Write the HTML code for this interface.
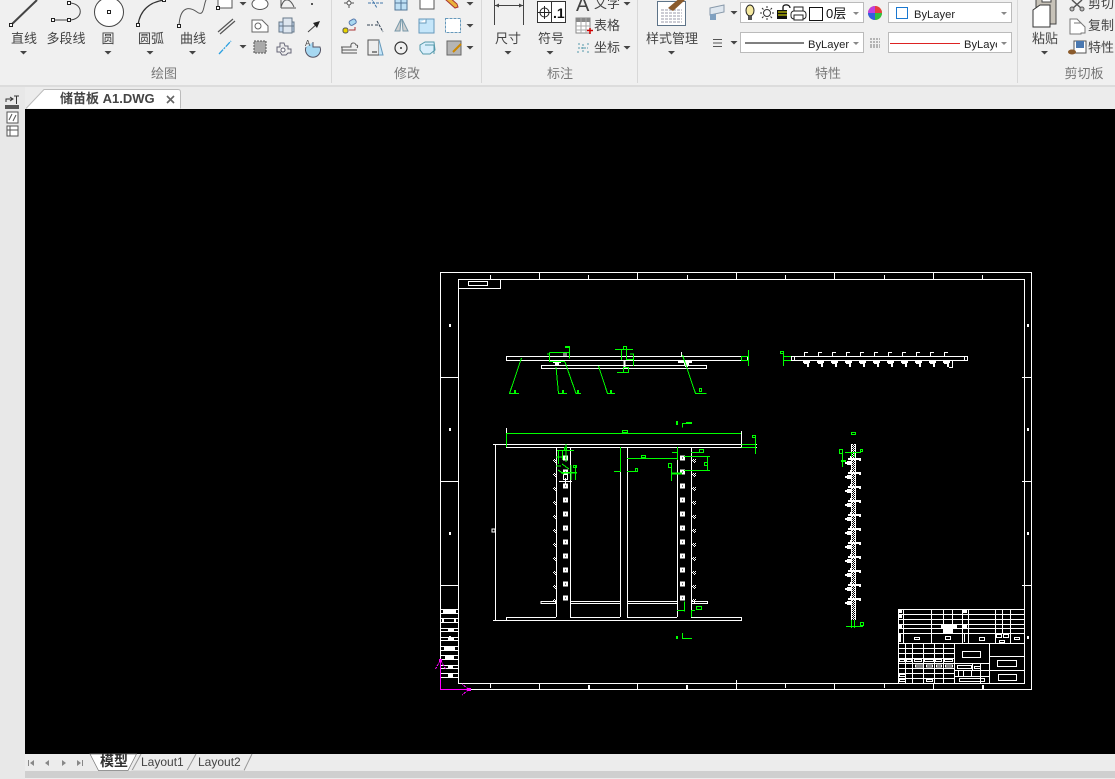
<!DOCTYPE html>
<html><head><meta charset="utf-8">
<style>
html,body{margin:0;padding:0;background:#f0f0f0}
body{width:1115px;height:779px;overflow:hidden;position:relative}
svg{position:absolute;left:0;top:0;display:block}
text{font-family:"Liberation Sans","Noto Sans CJK SC",sans-serif;font-size:13px;fill:#444}
.g{fill:#777;text-anchor:middle}
.m{text-anchor:middle}
.cad *{shape-rendering:crispEdges}
.w{fill:none;stroke:#fff;stroke-width:1}
.gr{fill:none;stroke:#0f0;stroke-width:1}
.ic{fill:none;stroke:#555;stroke-width:1}
</style></head><body>
<svg width="1115" height="779" viewBox="0 0 1115 779" xmlns="http://www.w3.org/2000/svg">
<defs>
<path id="tri" d="M-3.500 0H3.500L0 3.500Z" fill="#444"/>
<g id="sq"><rect x="-1.500" y="-1.500" width="3" height="3" fill="#fff" stroke="#222"/></g>
<path id="chk" d="M1 0h1v1h-1zM3 0h1v1h-1zM0 1h1v1h-1zM2 1h1v1h-1zM1 2h1v1h-1zM3 2h1v1h-1zM2 3h1v1h-1z" fill="#fff"/>
<g id="hole"><rect x="-2.500" y="-2.500" width="5" height="5" fill="#fff"/><rect x="-.5" y="-.5" width="1" height="1" fill="#000"/><use href="#chk" x="-12.500" y="1"/></g>
<g id="hole2"><rect x="-2.500" y="-2.500" width="5" height="5" fill="#fff"/><rect x="-.5" y="-.5" width="1" height="1" fill="#000"/><use href="#chk" x="9.500" y="1"/></g>
<g id="br2"><path d="M.5 356V352.500H4" class="w"/><rect x="-1" y="361" width="7" height="2" fill="#fff"/><rect x="0" y="363" width="4" height="1" fill="#fff"/><rect x="3" y="363" width="2" height="4" fill="#fff"/></g>
<g id="br3"><rect x="-3" y="0" width="12" height="2" fill="#fff"/><rect x="8" y="0" width="2" height="3" fill="#fff"/><rect x="-6" y="4" width="6" height="2" fill="#fff"/><rect x="-4" y="3" width="4" height="4" fill="#fff"/><rect x="-1" y="-2" width="1" height="2" fill="#fff"/><rect x="-1" y="4" width="3" height="3" fill="#000" opacity="0"/></g>
<pattern id="ck" width="2" height="2" patternUnits="userSpaceOnUse"><rect width="1" height="1" fill="#fff"/><rect x="1" y="1" width="1" height="1" fill="#fff"/></pattern>
</defs>

<!-- backgrounds -->
<rect width="1115" height="85" fill="#f0f0f0"/>
<rect y="85" width="1115" height="2" fill="#dcdcdc"/>
<rect y="87" width="1115" height="22" fill="#ececec"/>
<rect x="0" y="87" width="25" height="692" fill="#e8e8e8"/>
<rect x="25" y="109" width="1090" height="645" fill="#000"/>
<rect x="25" y="754" width="1090" height="17" fill="#ececec"/>
<rect x="25" y="771" width="1090" height="7" fill="#cfcfcf"/>
<rect x="25" y="778" width="1090" height="1" fill="#ececec"/>

<!-- ribbon separators -->
<g fill="#d8d8d8"><rect x="331" y="0" width="1" height="83"/><rect x="481" y="0" width="1" height="83"/><rect x="637" y="0" width="1" height="83"/><rect x="1017" y="0" width="1" height="83"/></g>

<!-- draw panel -->
<path d="M11 25L37 0" stroke="#444" stroke-width="2" fill="none"/><use href="#sq" x="11" y="25"/>
<path d="M53 20H69C84 20 84 3 69 3" stroke="#444" fill="none"/><use href="#sq" x="53" y="20"/><use href="#sq" x="69" y="20"/><use href="#sq" x="69" y="3"/>
<circle cx="109" cy="12" r="14.500" fill="#fff" stroke="#444"/><use href="#sq" x="109" y="12"/>
<path d="M138 25C140 10 150 2 164 0" stroke="#333" stroke-width="1.200" fill="none"/><use href="#sq" x="138" y="25"/><use href="#sq" x="164" y="0"/>
<path d="M179 26C180 5 190 7 197 12C205 18 203 3 207 -2" stroke="#555" fill="none"/><use href="#sq" x="179" y="26"/>
<text x="24" y="43" class="m">直线</text><text x="66" y="43" class="m">多段线</text><text x="108" y="43" class="m">圆</text><text x="151" y="43" class="m">圆弧</text><text x="193" y="43" class="m">曲线</text>
<use href="#tri" x="23.500" y="51"/><use href="#tri" x="108" y="51"/><use href="#tri" x="150" y="51"/><use href="#tri" x="192.500" y="51"/>
<rect x="218" y="-6" width="14" height="14" fill="#fff" stroke="#555"/><use href="#sq" x="218" y="8"/>
<use href="#tri" x="243" y="2"/><use href="#tri" x="243" y="45"/>
<ellipse cx="260" cy="4" rx="8" ry="5.500" fill="#fff" stroke="#555"/>
<path d="M281 8V-3M281 8H296M281 7C284 -3 290 -2 294 7" class="ic"/>
<rect x="311" y="3" width="2" height="2" fill="#555"/>
<path d="M218 32L233 19M220 34L235 21" stroke="#555" stroke-width="1.200" fill="none"/>
<path d="M252 20H262L268 26V32H252Z" fill="#fff" stroke="#666"/><circle cx="258" cy="26" r="3" fill="none" stroke="#666"/>
<rect x="279" y="22" width="15" height="10" fill="#c5daf0" stroke="#678"/><rect x="283" y="18" width="9" height="15" fill="#dde6ef" stroke="#678"/><path d="M279 26H294" stroke="#678"/>
<path d="M308 32L318 23" stroke="#444"/><path d="M320 21L313 23L317 28Z" fill="#222"/>
<path d="M219 54L231 41" stroke="#2a9fe0" stroke-width="1.300" stroke-dasharray="6 1 2 1" fill="none"/>
<rect x="254" y="41" width="12" height="12" fill="#a9a9a9" stroke="#555" stroke-dasharray="2 1"/>
<path d="M280 43h4l1 3h3v3h3v4h-3l-2 2h-4l-2-3h-3v-5h3Z" fill="#eee" stroke="#667"/><circle cx="283" cy="50" r="2" fill="#fff" stroke="#667"/>
<path d="M306 47A7.500 7.500 0 1 0 320 47H313V42" fill="#a6d8f2" stroke="#556"/><text x="305" y="46" style="font-size:8px">A</text>
<text x="164" y="78" class="g">绘图</text>

<!-- modify panel -->
<g class="ic">
<path d="M344 3H354M349 -2V8" stroke="#555"/><circle cx="349" cy="3" r="2" fill="#fff"/>
<path d="M368 3H383M371 -2L377 8" stroke-dasharray="3 1" stroke="#47a"/>
<path d="M395 -3H407V10H395ZM401 -3V10M395 3H407" fill="#bfe0f5" stroke="#579"/>
<rect x="420" y="-4" width="14" height="13" fill="#fff"/>
<path d="M446 0L455 8L458 7L457 4L449 -3Z" fill="#e9b23c" stroke="#a33"/>
</g>
<use href="#tri" x="470" y="2"/><use href="#tri" x="470" y="24"/><use href="#tri" x="470" y="46"/>
<rect x="343" y="28" width="5" height="5" rx="2" fill="#e8d400" stroke="#555"/><rect x="349" y="20" width="7" height="5" rx="2" fill="#a9d8f0" stroke="#57a" transform="rotate(-30 352 22)"/><path d="M349 30H355V27" stroke="#a33" fill="none"/>
<path d="M367 25H373M375 25H378M377 21L383 32" stroke="#345" stroke-width="1" stroke-dasharray="3 1" fill="none"/>
<path d="M401 19L395 31H400ZM402 19L408 31H403Z" fill="#cfcfcf" stroke="#79a"/>
<rect x="419" y="19" width="15" height="14" fill="#c5e6fa" stroke="#69b"/><path d="M419 23H426V19" fill="#fff" stroke="#69b"/>
<rect x="445.500" y="18.500" width="15" height="14" fill="#fff" stroke="#69b" stroke-dasharray="3 1"/>
<path d="M342 50H357M341 47H351C350 42 355 42 356 45C359 45 357 48 357 48M342 47V53H357" class="ic"/>
<path d="M368 40H379V55H368Z" fill="#eee" stroke="#555"/><path d="M379 40L383 55H379" fill="#c5e6fa" stroke="#69b"/><path d="M372 52H377" stroke="#222"/>
<circle cx="401" cy="48" r="6" fill="none" stroke="#333" stroke-width="1.200"/><circle cx="401" cy="48" r="1" fill="#333"/>
<path d="M420 45L425 42H434L435 50L430 54H423L420 50ZM425 45H434V54" fill="#d9eefb" stroke="#59a"/>
<rect x="447" y="41" width="14" height="14" fill="#b5b5b5" stroke="#666"/><path d="M453 52L461 44" stroke="#c80" stroke-width="2"/>
<text x="407" y="78" class="g">修改</text>

<!-- annotate panel -->
<path d="M494.500 0V25M523.500 0V25M495 5.500H523" stroke="#444" fill="none"/><path d="M495 5.500l4-2v4zM523 5.500l-4-2v4z" fill="#444"/>
<rect x="537.500" y="1.500" width="28" height="21" fill="#fff" stroke="#333"/><path d="M551.500 1V22" stroke="#333"/><circle cx="544.500" cy="12.500" r="4.500" fill="none" stroke="#222"/><path d="M538 12.500H551M544.500 6V19" stroke="#222"/>
<text x="553" y="18" style="font-size:14px;font-weight:bold;fill:#111">.1</text>
<text x="508" y="43" class="m">尺寸</text><text x="551" y="43" class="m">符号</text>
<use href="#tri" x="508" y="51"/><use href="#tri" x="550" y="51"/>
<text x="576" y="11" style="font-size:20px;fill:#444">A</text><text x="594" y="8">文字</text><use href="#tri" x="627" y="2"/>
<rect x="576" y="18" width="14" height="15" fill="#fff" stroke="#888"/><rect x="576" y="18" width="14" height="4" fill="#888"/><path d="M576 26H590M576 30H590M581 18V33M586 18V33" stroke="#aaa"/><path d="M587 30.500H593M590 28V34" stroke="#c00" stroke-width="1.500"/>
<text x="594" y="30">表格</text>
<path d="M578 44h2M587 44h2M577 52h3M587 52h3M583 44V53M578 48h10" stroke="#59a" stroke-dasharray="2 1" fill="none"/>
<text x="594" y="52">坐标</text><use href="#tri" x="627" y="46"/>
<text x="560" y="78" class="g">标注</text>

<!-- properties -->
<rect x="657.500" y="1.500" width="28" height="24" fill="#fff" stroke="#5d7388"/><path d="M661 10H682M661 13H682M661 16H682M661 19H682M661 22H682" stroke="#99a" stroke-dasharray="3 1"/><path d="M668 8L681 -3L685 0L673 11Z" fill="#8a5a2b"/>
<text x="672" y="43" class="m">样式管理</text><use href="#tri" x="671.500" y="51"/>
<path d="M710 8L724 5V12L710 15Z" fill="#dfe7ef" stroke="#89a"/><rect x="710" y="14" width="6" height="6" fill="#7fa0c0"/>
<use href="#tri" x="734" y="11"/><use href="#tri" x="734" y="41"/>
<path d="M713 39.500H722M713 43H722M713 46.500H722" stroke="#555"/>
<rect x="740.500" y="2.500" width="123" height="20" fill="#fff" stroke="#bbb"/>
<rect x="740.500" y="32.500" width="123" height="20" fill="#fff" stroke="#bbb"/>
<rect x="888.500" y="2.500" width="123" height="20" fill="#fff" stroke="#bbb"/>
<rect x="888.500" y="32.500" width="123" height="20" fill="#fff" stroke="#bbb"/>
<ellipse cx="750" cy="10.500" rx="4" ry="5.500" fill="#f5e9a0" stroke="#222"/><rect x="748" y="16" width="4" height="4" fill="#555"/>
<circle cx="767" cy="13" r="3.500" fill="#fff" stroke="#333"/><path d="M767 6V8M767 18V20M760 13H762M772 13H774M762 8L763.500 9.500M772 8L770.500 9.500M762 18L763.500 16.500M772 18L770.500 16.500" stroke="#333"/>
<rect x="777" y="10" width="10" height="9" fill="#111"/><path d="M778 12H787M778 15H787" stroke="#ee0"/><path d="M783 10V7C783 4 790 4 790 8" stroke="#111" stroke-width="1.300" fill="none"/>
<rect x="791" y="11" width="15" height="8" rx="3" fill="#fff" stroke="#222"/><rect x="794" y="7" width="9" height="4" fill="#fff" stroke="#222"/><rect x="794" y="15" width="9" height="5" fill="#fff" stroke="#222"/>
<rect x="809.500" y="7.500" width="13" height="13" fill="#fff" stroke="#111"/>
<text x="826" y="18" style="fill:#111">0层</text><path d="M853 12h6l-3 3z" fill="#888"/>
<path d="M745 43H804" stroke="#000"/><text x="808" y="48" style="fill:#222;font-size:11.200px">ByLayer</text><path d="M853 42h6l-3 3z" fill="#888"/>
<circle cx="875" cy="13" r="7" fill="#e8a020"/><path d="M875 13V6A7 7 0 0 1 882 13Z" fill="#e84040"/><path d="M875 13H882A7 7 0 0 1 875 20Z" fill="#30c040"/><path d="M875 13V20A7 7 0 0 1 868 13Z" fill="#3060e0"/><path d="M875 13H868A7 7 0 0 1 875 6Z" fill="#c040e0"/>
<rect x="896.500" y="7.500" width="11" height="11" fill="#fff" stroke="#1a78d0"/><text x="914" y="18" style="fill:#222;font-size:11.200px">ByLayer</text><path d="M1001 12h6l-3 3z" fill="#888"/>
<path d="M870 39H880M870 42H880M870 45H880M870 47H880" stroke="#777" stroke-dasharray="2 1"/>
<path d="M890 43.500H960" stroke="#d22"/>
<svg x="964" y="33" width="33" height="19" viewBox="0 0 33 19"><text x="0" y="15" style="fill:#222;font-size:11.200px">ByLayer</text></svg>
<path d="M1001 42h6l-3 3z" fill="#888"/>
<text x="828" y="78" class="g">特性</text>

<!-- clipboard -->
<rect x="1036" y="-3" width="20" height="27" fill="#c7c2b8" stroke="#444"/><rect x="1042" y="-3" width="9" height="5" fill="#fff" stroke="#444"/><path d="M1033 10L1040 5H1050V27H1033Z" fill="#fff" stroke="#333"/>
<text x="1045" y="43" class="m">粘贴</text><use href="#tri" x="1044.500" y="51"/>
<path d="M1072 0L1082 9M1082 0L1072 9" stroke="#555" stroke-width="1.500"/><circle cx="1072" cy="9" r="2" fill="#bbb" stroke="#555"/><circle cx="1082" cy="9" r="2" fill="#bbb" stroke="#555"/>
<text x="1088" y="8">剪切</text>
<path d="M1070 19H1077L1081 23V34H1070Z" fill="#fff" stroke="#777"/><path d="M1074 23H1081L1085 27V33H1081" fill="#fff" stroke="#777"/>
<text x="1088" y="30">复制</text>
<rect x="1074" y="41" width="12" height="12" fill="#fff" stroke="#555"/><rect x="1076" y="41" width="8" height="7" fill="#4a78b0"/><ellipse cx="1072" cy="52" rx="4" ry="2.500" fill="#8a5a2b"/>
<text x="1088" y="52">特性</text>
<text x="1084" y="78" class="g">剪切板</text>

<!-- doc tab -->
<path d="M26 108.500L44 89.500H178Q180.500 89.500 180.500 92V108.500" fill="#fff" stroke="#bbb"/>
<text x="60" y="103" style="font-weight:bold;font-size:13px;fill:#444">储苗板 A1.DWG</text>
<path d="M167 96L174 103M174 96L167 103" stroke="#666" stroke-width="1.600"/>

<!-- left strip -->
<rect x="5" y="105" width="14" height="4" fill="#555"/><path d="M6 102V99H12M10 97L13 99L10 101M14 96H19M16.500 96V104" stroke="#333" fill="none"/>
<rect x="7" y="112" width="11" height="11" fill="#fff" stroke="#555"/><path d="M9 120L12 114M13 121L16 115" stroke="#555"/>
<rect x="7" y="126" width="11" height="10" fill="#fff" stroke="#555"/><path d="M10 126V136M7 130H18" stroke="#555"/>

<!-- CAD drawing -->
<g class="cad">
<rect x="440.500" y="272.500" width="591" height="417" class="w"/>
<rect x="458.500" y="279.500" width="566" height="404" class="w"/>
<rect x="458.500" y="279.500" width="42" height="9" class="w"/>
<rect x="468.500" y="281.500" width="19" height="4" class="w"/>
<!-- frame ticks -->
<path class="w" d="M490.500 275V279M539.500 272V279M588.500 275V279M637.500 272V279M687.500 275V279M736.500 272V279M785.500 275V279M834.500 272V279M884.500 275V279M933.500 272V279M982.500 275V279
M490.500 684V688M539.500 684V689M637.500 684V689M736.500 680V689M785.500 684V688M834.500 684V689M884.500 684V688M933.500 684V689
M441 377.500H458M441 481.500H458M441 585.500H458M1022 377.500H1031M1022 481.500H1031M1022 585.500H1031"/>
<g fill="#fff"><rect x="449" y="324" width="2" height="3"/><rect x="449" y="428" width="2" height="3"/><rect x="449" y="532" width="2" height="3"/><rect x="449" y="636" width="2" height="3"/>
<rect x="1027" y="324" width="2" height="3"/><rect x="1027" y="428" width="2" height="3"/><rect x="1027" y="532" width="2" height="3"/><rect x="1027" y="636" width="2" height="3"/>
<rect x="588" y="685" width="2" height="4"/><rect x="686" y="685" width="2" height="4"/><rect x="982" y="685" width="2" height="4"/></g>

<!-- left margin block -->
<path class="w" d="M441 609.500H458M441 613.500H458M441 618.500H458M441 622.500H458M441 628.500H458M441 631.500H458M441 637.500H458M441 640.500H458M441 646.500H458M441 650.500H458M441 655.500H458M441 659.500H458M441 665.500H458M441 668.500H458M441 673.500H458M441 677.500H458"/>
<g fill="#fff"><rect x="443" y="610" width="13" height="3"/><rect x="448" y="629" width="6" height="2"/><rect x="448" y="638" width="6" height="2"/><rect x="444" y="647" width="11" height="3"/><rect x="445" y="656" width="9" height="3"/><rect x="448" y="666" width="5" height="2"/><rect x="448" y="674" width="5" height="3"/><rect x="442" y="619" width="2" height="3"/><rect x="454" y="619" width="2" height="3"/></g>

<!-- figure 1 -->
<rect x="506.500" y="356.500" width="241" height="4" class="w"/>
<rect x="541.500" y="365.500" width="165" height="3" class="w"/>
<path class="w" d="M624 361V367M625 361V367M564 352V356M566 352V356M681.500 352V356"/>
<path d="M553 361h8v2h-2v2h-4v-2h-2zM678 361h14v2h-3v2h-1v2h-3v-2h-1v-2h-6z" fill="#fff"/>
<path class="gr" d="M521.500 358L509.500 393.500H519M556 367L558.500 393.500H567M565 362L576 393.500H581M598.500 366L607.500 393.500H615M682.500 355L695.500 393.500H706.500
M549.500 352.500H569M549.500 352.500V361.500H565M569.500 346.500V358.500M566 346.500H570M547 354H549M615 349.500H633M621.500 349.500V360M626.500 349.500V359.500H633M633.500 354V366M630 354H634M617 372.500H623M748.500 350V366"/>
<rect x="623.500" y="346.500" width="3" height="3" class="gr"/><rect x="623.500" y="367.500" width="5" height="5" class="gr"/><rect x="741.500" y="356.500" width="7" height="4" class="gr"/>
<g fill="#0f0"><rect x="514" y="390" width="2" height="3"/><rect x="562" y="390" width="2" height="3"/><rect x="577" y="390" width="2" height="3"/><rect x="610" y="390" width="2" height="3"/><rect x="565" y="346" width="4" height="2"/></g>
<rect x="699.500" y="388.500" width="2" height="3" class="gr"/>

<!-- figure 2 -->
<rect x="791.500" y="356.500" width="176" height="4" class="w"/>
<path class="w" d="M794.500 356V360M964.500 356V360"/>
<use href="#br2" x="804"/><use href="#br2" x="818"/><use href="#br2" x="832"/><use href="#br2" x="846"/><use href="#br2" x="860"/><use href="#br2" x="874"/><use href="#br2" x="888"/><use href="#br2" x="902"/><use href="#br2" x="916"/><use href="#br2" x="930"/><use href="#br2" x="944"/>
<path class="w" d="M952.500 361V367.500H949"/>
<rect x="780.500" y="351.500" width="3" height="2" class="gr"/><path class="gr" d="M783.500 354V366M784 356.500H791M784 360.500H791"/>

<!-- figure 4 -->
<path class="w" d="M493 444.500H757M506 447.500H757M495.500 444V620M506.500 428V433M741.500 431V447M556.500 447V617M570.500 447V617M620.500 447V617M627.500 447V617M677.500 447V617M691.500 447V617
M506.500 617.500H556M570 617.500H620M627 617.500H677M691 617.500H741.500V620.500H493M506.500 617V620
M541 601.500H556M541 603.500H556M541 601V604M570 601.500H620M570 603.500H620M627 601.500H677M627 603.500H677M691 601.500H707M691 603.500H707M707.500 601V604"/>
<use href="#hole" x="565.500" y="458"/><use href="#hole" x="565.500" y="472"/><use href="#hole" x="565.500" y="486"/><use href="#hole" x="565.500" y="500"/><use href="#hole" x="565.500" y="514"/><use href="#hole" x="565.500" y="528"/><use href="#hole" x="565.500" y="542"/><use href="#hole" x="565.500" y="556"/><use href="#hole" x="565.500" y="570"/><use href="#hole" x="565.500" y="584"/><use href="#hole" x="565.500" y="598"/>
<use href="#hole2" x="682.500" y="458"/><use href="#hole2" x="682.500" y="472"/><use href="#hole2" x="682.500" y="486"/><use href="#hole2" x="682.500" y="500"/><use href="#hole2" x="682.500" y="514"/><use href="#hole2" x="682.500" y="528"/><use href="#hole2" x="682.500" y="542"/><use href="#hole2" x="682.500" y="556"/><use href="#hole2" x="682.500" y="570"/><use href="#hole2" x="682.500" y="584"/><use href="#hole2" x="682.500" y="598"/>
<rect x="563.500" y="474.500" width="4" height="5" class="w"/><path class="w" d="M559 481.500H572M565.500 478V484"/>
<rect x="492" y="529" width="3" height="3" fill="#000" stroke="#fff"/>
<path class="gr" d="M506.500 433.500H741M506.500 433V447M741.500 444.500H755M741.500 447.500H755M755.500 435V454M682.500 423V427.500M682.500 423.500H692M686 422.500H692M684.500 601.500V611.500M677 610.500H684M691.500 610V617M691.500 610.500H695M682.500 633V638.500H692
M557 450.500H574M558.500 450V464M562.500 450V460M566 444V462M556 457H562M562 464L569 469M556 466H561M558 470L564 474M571 465V480M561 473H577M561 472.500H577M575.500 466V480
M627 458.500H677M620.500 447V472M614 471.500H620M627 471.500H637M677.500 447V460M672 452.500H677M684 456.500H710M707.500 456.500V470.500M684 470.500H710M691 452.500H703M671.500 467V481M671.500 474H682M671.500 473H682"/>
<rect x="564.500" y="447.500" width="2" height="3" class="gr"/><rect x="573.500" y="465.500" width="3" height="2" class="gr"/><rect x="622.500" y="430.500" width="5" height="2" class="gr"/><rect x="641.500" y="455.500" width="4" height="2" class="gr"/><rect x="635.500" y="468.500" width="2" height="3" class="gr"/><rect x="699.500" y="449.500" width="4" height="3" class="gr"/><rect x="704.500" y="462.500" width="3" height="3" class="gr"/><rect x="668.500" y="463.500" width="3" height="4" class="gr"/><rect x="696.500" y="606.500" width="5" height="3" class="gr"/><rect x="752.500" y="435.500" width="3" height="2" class="gr"/>
<rect x="676" y="421" width="2" height="4" fill="#0f0"/><rect x="676" y="636" width="2" height="3" fill="#0f0"/>

<!-- figure 3 -->
<rect x="851" y="444" width="5" height="176" fill="url(#ck)"/>
<path d="M851.500 444V620M855.500 444V620" stroke="#fff" fill="none" stroke-dasharray="3 1"/>
<use href="#br3" x="851" y="458"/><use href="#br3" x="851" y="472"/><use href="#br3" x="851" y="486"/><use href="#br3" x="851" y="500"/><use href="#br3" x="851" y="514"/><use href="#br3" x="851" y="528"/><use href="#br3" x="851" y="542"/><use href="#br3" x="851" y="556"/><use href="#br3" x="851" y="570"/><use href="#br3" x="851" y="584"/><use href="#br3" x="851" y="598"/>
<rect x="851.500" y="432.500" width="4" height="2" class="gr"/><rect x="839.500" y="449.500" width="3" height="4" class="gr"/><rect x="860.500" y="449.500" width="2" height="2" class="gr"/><rect x="860.500" y="622.500" width="3" height="3" class="gr"/>
<path class="gr" d="M842.500 454V467M845 452.500H861M851.500 452V457M854.500 452V457M841 460.500H846M841 461.500H846M846 626.500H863M851.500 620V628M854.500 620V628"/>

<!-- title block -->
<rect x="898.500" y="609.500" width="126" height="74" class="w"/>
<path class="w" d="M898 614.500H1024M898 619.500H1024M898 624.500H1024M898 628.500H1024M898 633.500H1024M898 643.500H1024
M903.500 609V643M931.500 609V643M943.500 609V633M952.500 609V633M962.500 609V643M968.500 609V643M995.500 609V643M1002.500 609V633M1010.500 609V643
M954.500 643V683M989.500 643V683M898 648.500H954M898 653.500H954M898 658.500H954M898 663.500H954M898 668.500H954M898 673.500H954M898 678.500H954
M905.500 643V683M912.500 643V683M923.500 643V683M934.500 643V683M943.500 643V683
M954 663.500H989M954 670.500H989M954 676.500H989M989 656.500H1024M989 670.500H1024M972.500 663V670M980.500 663V683M958.500 670V677M963.500 670V677M971.500 670V677"/>
<g fill="#fff"><rect x="941" y="624" width="16" height="4"/><rect x="943" y="629" width="10" height="4"/><rect x="945" y="614" width="6" height="1"/><rect x="899" y="634" width="2" height="8"/><rect x="899" y="610" width="3" height="3"/><rect x="899" y="615" width="3" height="3"/><rect x="899" y="625" width="3" height="3"/><rect x="963" y="610" width="4" height="3"/><rect x="963" y="625" width="4" height="3"/><rect x="964" y="634" width="1" height="8"/></g>
<rect x="914.500" y="637.500" width="5" height="2" class="w"/><rect x="945.500" y="636.500" width="5" height="3" class="w"/><rect x="979.500" y="637.500" width="5" height="3" class="w"/><rect x="1014.500" y="637.500" width="5" height="2" class="w"/><rect x="996.500" y="634.500" width="5" height="3" class="w"/><rect x="1003.500" y="634.500" width="5" height="3" class="w"/><rect x="999.500" y="640.500" width="5" height="2" class="w"/>
<rect x="962.500" y="651.500" width="18" height="6" class="w"/><rect x="957.500" y="665.500" width="14" height="3" class="w"/><rect x="974.500" y="666.500" width="6" height="2" class="w"/><rect x="959.500" y="678.500" width="25" height="3" class="w"/>
<rect x="997.500" y="660.500" width="19" height="6" class="w"/><rect x="998.500" y="674.500" width="18" height="6" class="w"/>
<rect x="899.500" y="659.500" width="5" height="2" class="w"/><rect x="906.500" y="659.500" width="5" height="2" class="w"/><rect x="914.500" y="659.500" width="7" height="2" class="w"/><rect x="924.500" y="659.500" width="9" height="2" class="w"/><rect x="935.500" y="659.500" width="6" height="2" class="w"/><rect x="944.500" y="659.500" width="8" height="2" class="w"/><rect x="915.500" y="665" width="8" height="2" class="w"/><rect x="926.500" y="665" width="6" height="2" class="w"/><rect x="936.500" y="665" width="5" height="2" class="w"/><rect x="945.500" y="665" width="7" height="2" class="w"/><rect x="899.500" y="674.500" width="6" height="2" class="w"/><rect x="899.500" y="679.500" width="6" height="2" class="w"/><rect x="926.500" y="679.500" width="6" height="2" class="w"/>

<!-- UCS -->
<path d="M440.500 661V689.500H469" stroke="#f0f" fill="none"/>
<path d="M440.500 660L435.500 669M440.500 660L445.500 669M469 689.500L462 684M469 689.500L462 695" stroke="#f0f" stroke-dasharray="3 1" fill="none"/>
<rect x="439" y="659" width="3" height="3" fill="#f0f"/><rect x="468" y="688" width="3" height="3" fill="#f0f"/>
</g>

<!-- bottom tabs -->
<g fill="#888"><path d="M28 760h1v6h-1zM34 760v6l-4-3zM49 760v6l-4-3zM62 760l4 3-4 3zM77 760l4 3-4 3zM82 760h1v6h-1z"/></g>
<path d="M90 754L98.500 770.500H128L136.500 754Z" fill="#fff" stroke="#777" stroke-width=".7"/>
<text x="100" y="766" style="font-size:14px;font-weight:bold;fill:#333">模型</text>
<path d="M132 770.500L141 754M187 770.500L196 754M244 770.500L252 754" stroke="#999" fill="none"/><path d="M132 770.500H187M187 770.500H244" stroke="#ddd"/>
<text x="141" y="766" style="font-size:12px;fill:#444">Layout1</text>
<text x="198" y="766" style="font-size:12px;fill:#444">Layout2</text>
</svg>
</body></html>
